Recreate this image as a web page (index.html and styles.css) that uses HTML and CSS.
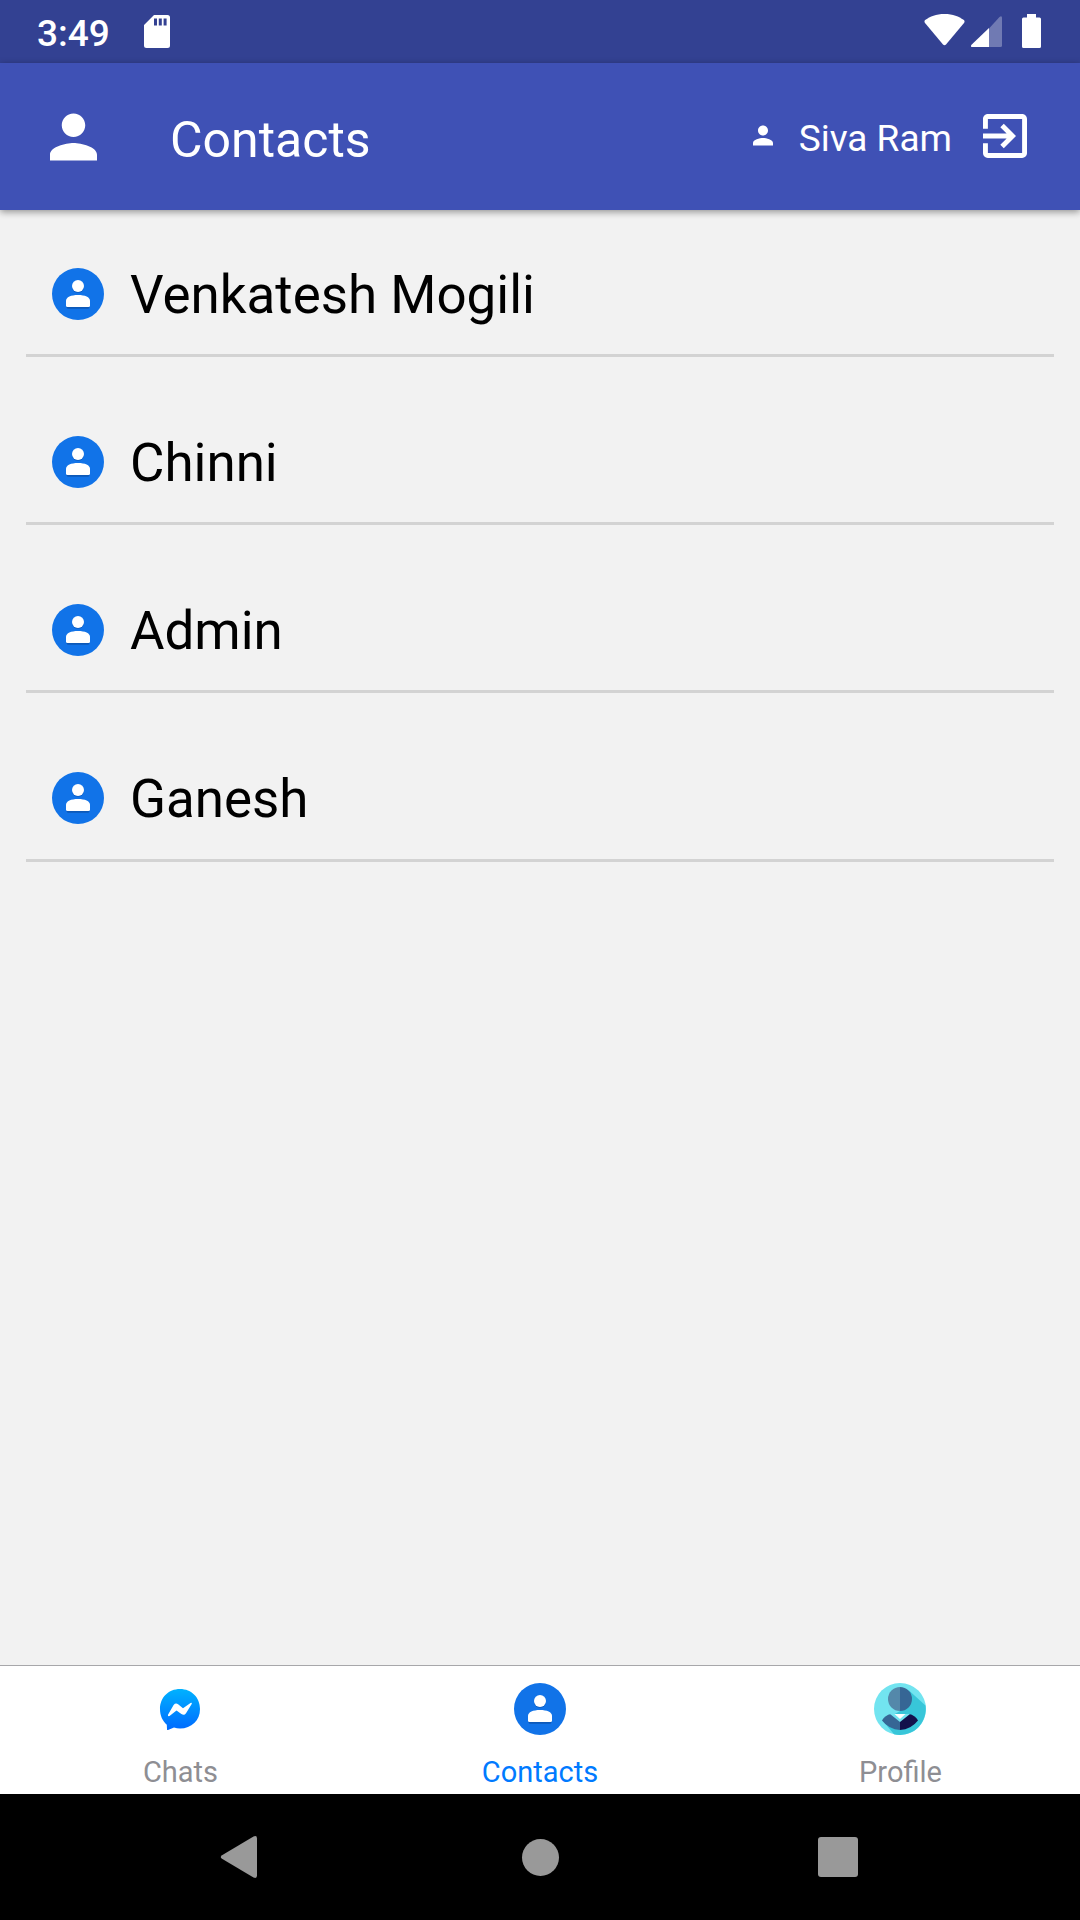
FILE: index.html
```html
<!DOCTYPE html>
<html lang="en">
<head>
<meta charset="utf-8">
<title>Contacts</title>
<link rel="stylesheet" href="styles.css">
</head>
<body>
<svg class="defs" width="0" height="0">
  <symbol id="person" viewBox="4 4 16 16"><path d="M12 12c2.21 0 4-1.79 4-4s-1.79-4-4-4-4 1.79-4 4 1.79 4 4 4zm0 2c-2.67 0-8 1.34-8 4v2h16v-2c0-2.66-5.33-4-8-4z"/></symbol>
  <symbol id="avatar" viewBox="0 0 52 52">
    <circle cx="26" cy="26" r="26" fill="#1173e8"/>
    <path d="M14 38.500h24l-1.500 2.300h-21z" fill="#0d59b8"/>
    <circle cx="26" cy="19" r="6" fill="#0d5fc6"/>
    <circle cx="26" cy="18" r="6" fill="#fff"/>
    <path d="M14 33c0-4 5-6 12-6s12 2 12 6v4.500q0 1.500-1.500 1.500h-21q-1.500 0-1.500-1.500z" fill="#fff"/>
  </symbol>
</svg>
<div class="screen">
  <div class="status">
    <span class="time">3:49</span>
    <svg class="sd" viewBox="0 0 26 33"><path fill="#fff" fill-rule="evenodd" d="M10 0H23.500Q26 0 26 2.500V30.500Q26 33 23.500 33H2.500Q0 33 0 30.500V10zM10 3.500v7h3v-7zM14.800 3.500v7h3v-7zM19.600 3.500v7h3v-7z"/></svg>
    <svg class="wifi" viewBox="0 0 41 32"><path fill="#fff" d="M20.500 0C29 0 35 2.600 39.500 5.800Q41.300 7.200 40 9L22 30.500Q20.500 32 19 30.500L1 9Q-.3 7.200 1.500 5.800C6 2.600 12 0 20.500 0z"/></svg>
    <svg class="signal" viewBox="0 0 31 31"><path fill="#fff" fill-opacity=".3" d="M18 12.500L28.500 1Q31-1 31 2V29.500Q31 31 29.500 31H18z"/><path fill="#fff" d="M18 12V31H1.500Q-1 31 .5 28.800z"/></svg>
    <svg class="battery" viewBox="0 0 19 34"><path fill="#fff" d="M5 0h9v3.500h3.500Q19 3.500 19 5v27.500Q19 34 17.500 34h-16Q0 34 0 32.500V5Q0 3.500 1.500 3.500H5z"/></svg>
  </div>
  <header class="bar">
    <svg class="bar-icon"><use href="#person"/></svg>
    <h1 class="title">Contacts</h1>
    <svg class="user-icon"><use href="#person"/></svg>
    <span class="user">Siva Ram</span>
    <svg class="exit" viewBox="3 3 18 18"><path d="M10.090 15.590L11.500 17l5-5-5-5-1.410 1.410L12.670 11H3v2h9.670l-2.580 2.590zM19 3H5c-1.110 0-2 .9-2 2v4h2V5h14v14H5v-4H3v4c0 1.100.89 2 2 2h14c1.100 0 2-.9 2-2V5c0-1.100-.9-2-2-2z"/></svg>
  </header>
  <main class="list">
    <div class="row"><svg class="avatar"><use href="#avatar"/></svg><span class="name">Venkatesh Mogili</span></div>
    <div class="row"><svg class="avatar"><use href="#avatar"/></svg><span class="name">Chinni</span></div>
    <div class="row"><svg class="avatar"><use href="#avatar"/></svg><span class="name">Admin</span></div>
    <div class="row"><svg class="avatar"><use href="#avatar"/></svg><span class="name">Ganesh</span></div>
  </main>
  <nav class="tabs">
    <div class="tab">
      <svg class="avatar" viewBox="0 0 52 52">
        <defs><linearGradient id="blue" x1="0" y1="0" x2="0" y2="1"><stop offset="0" stop-color="#00b2ff"/><stop offset="1" stop-color="#006aff"/></linearGradient></defs>
        <path fill="url(#blue)" d="M26 6C37.500 6 46 14.500 46 26S37.500 45.500 26 45.500q-3 0-6-.9L14 47q-1 .3-1-.8l-.2-4.500C8.500 38 6 32.500 6 26 6 14.500 14.500 6 26 6z"/>
        <path fill="#fff" d="M14 31.800L19.600 22q2-2.500 4.500-.8L29 25.200 36.500 20q1.800-.6 1.200 1L32 30.200q-1.800 2.800-4.600.8L22.500 27.400 15.500 33q-2 .6-1.500-1.200z"/>
      </svg>
      <span class="label">Chats</span>
    </div>
    <div class="tab active"><svg class="avatar"><use href="#avatar"/></svg><span>Contacts</span></div>
    <div class="tab">
      <svg class="avatar" viewBox="0 0 52 52">
        <circle cx="26" cy="26" r="26" fill="#72e4f0"/>
        <path fill="#38c6d9" d="M35 7.500L51.500 22.500A26 26 0 0 1 20 51.300L9 38 26 28z"/>
        <path fill="#5488aa" d="M26 4a12 12 0 0 0 0 24z"/>
        <path fill="#366695" d="M26 4a12 12 0 0 1 0 24z"/>
        <path fill="#366695" d="M26 31H17Q11 32 8 37.500 15 46.500 26 47z"/>
        <path fill="#13114b" d="M26 31h9Q41 32 44 37.500 37 46.500 26 47z"/>
        <path fill="#72e4f0" d="M16 31h20L26 39z"/>
        <path fill="#fff" d="M20.500 31h11L26 36z"/>
      </svg>
      <span class="label">Profile</span>
    </div>
  </nav>
  <div class="nav">
    <svg viewBox="0 0 44 44"><path d="M2 20.200L33.500 1.500Q37 0 37 3.500V40.500Q37 44 33.500 42.500L2 23.800Q-.5 22 2 20.200z"/></svg>
    <svg viewBox="0 0 44 44"><circle cx="22.500" cy="22.500" r="18.500"/></svg>
    <svg viewBox="0 0 44 44"><rect x="2" y="2" width="40" height="40" rx="3"/></svg>
  </div>
</div>
</body>
</html>
```
FILE: styles.css
```css
body { margin: 0; font-family: Roboto, sans-serif; }
svg { display: block; flex: none; }
.defs { position: absolute; }
.screen { width: 1080px; height: 1920px; display: flex; flex-direction: column; background: #f2f2f2; }
.status { height: 63px; box-sizing: border-box; background: #334192; display: flex; align-items: flex-start; padding: 14px 39px 0 37px; }
.time { color: #fff; font-size: 37px; line-height: 38px; font-weight: 500; width: 107px; margin-top: 1px; }
.sd { width: 26px; height: 33px; margin: 1px auto 0 0; }
.wifi { width: 41px; height: 32px; }
.signal { width: 31px; height: 31px; margin: 2px 20px 0 6px; }
.battery { width: 19px; height: 34px; }
.bar { height: 147px; box-sizing: border-box; background: #3f51b5; display: flex; align-items: flex-start; color: #fff; fill: #fff; padding: 50px 53px 0 50px; box-shadow: 0 2px 7px rgba(0, 0, 0, .4); }
.bar-icon { width: 47px; height: 48px; margin-right: 73px; }
.title { margin: -2px auto 0 0; font-size: 50px; line-height: 58px; font-weight: 400; }
.user-icon { width: 20px; height: 21px; margin: 12px 26px 0 0; }
.user { font-size: 37px; line-height: 44px; margin: 4px 31px 0 0; }
.exit { width: 44px; height: 44px; margin-top: 1px; }
.list { flex: 1; padding: 0 26px; }
.row { height: 168px; box-sizing: border-box; display: flex; align-items: center; gap: 26px; padding: 45px 26px 0; border-bottom: 3px solid #d3d3d3; }
.row:first-child { height: 147px; padding-top: 24px; }
.row:last-child { height: 169px; padding-top: 44px; }
.avatar { width: 52px; height: 52px; }
.name { font-size: 52.900px; line-height: 62px; color: #000; padding-top: 2px; }
.tabs { height: 129px; box-sizing: border-box; background: #fff; border-top: 1px solid #a7a7aa; display: flex; padding-top: 17px; }
.tab { flex: 1; display: flex; flex-direction: column; align-items: center; gap: 20px; font-size: 29px; line-height: 34px; color: #8e8e93; }
.label { padding-left: 1px; }
.active { color: #007aff; }
.nav { height: 126px; background: #000; fill: #999; display: flex; align-items: center; justify-content: center; gap: 254px; }
.nav svg { width: 44px; height: 44px; }
```
